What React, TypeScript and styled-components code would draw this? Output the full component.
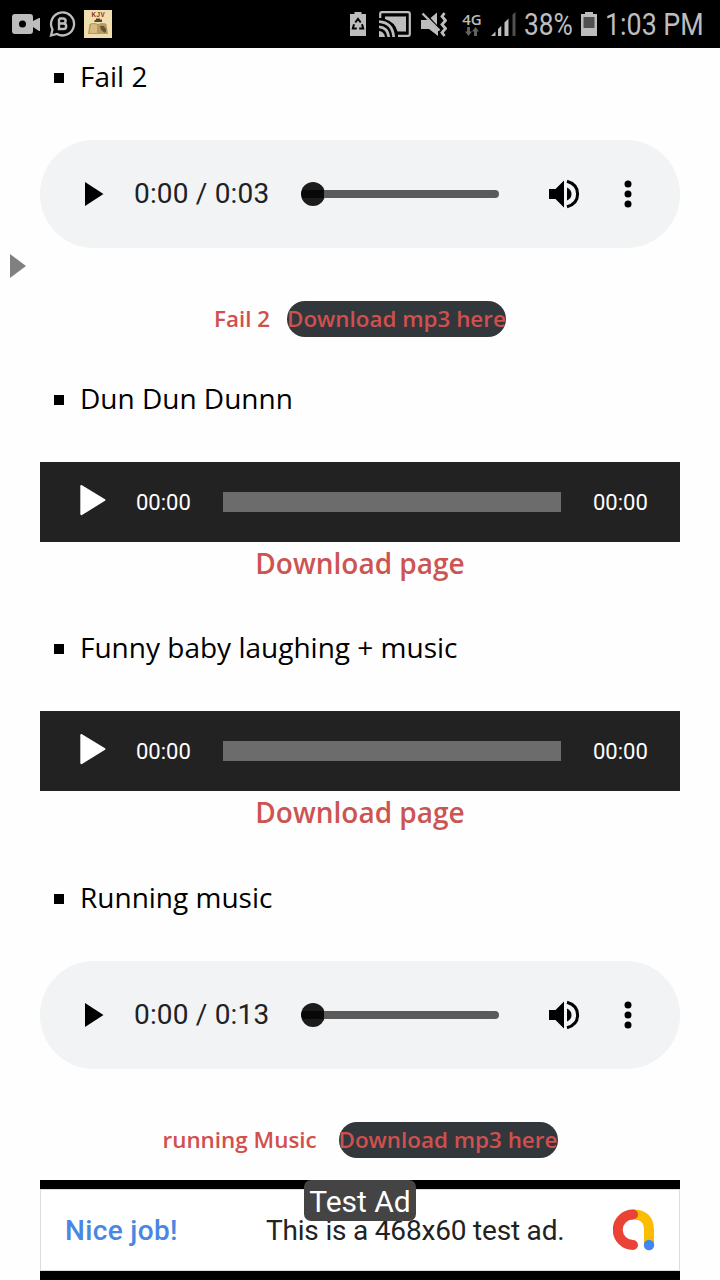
import React from 'react';
import styled, { createGlobalStyle } from 'styled-components';

const Global = createGlobalStyle`
  * { box-sizing: border-box; }
  body { margin: 0; background: #fff; overflow: hidden; }
`;

const Screen = styled.div`
  position: relative;
  width: 720px;
  height: 1280px;
  overflow: hidden;
  display: flex;
  flex-direction: column;
  background: #fefefe;
  color: #000;
  font-family: 'Open Sans', 'Noto Sans', sans-serif;
`;

const StatusBar = styled.header`
  flex: none;
  height: 48px;
  background: #000;
  color: #bdbdbd;
  display: flex;
  justify-content: space-between;
  padding: 0 16px 0 12px;
`;

const StatusGroup = styled.div`
  display: flex;
  align-items: center;
`;

const StatusIcon = styled.svg<{ $gap?: number }>`
  display: block;
  flex: none;
  margin-right: ${(p) => p.$gap ?? 8}px;
`;

const StatusText = styled.span<{ $w: number; $scale: number }>`
  display: block;
  width: ${(p) => p.$w}px;
  font: 400 31px/48px Roboto, sans-serif;
  white-space: nowrap;
  padding-top: 1px;

  > span {
    display: inline-block;
    transform: scaleX(${(p) => p.$scale});
    transform-origin: 0 50%;
  }
`;

const NetworkType = styled.div`
  display: flex;
  flex-direction: column;
  align-items: center;
  width: 22px;
  margin-right: 8px;
  font: 600 15px/14px 'Open Sans', sans-serif;

  svg {
    margin-top: 1px;
  }
`;

const Content = styled.main`
  flex: 1;
  min-height: 0;
  padding: 7px 40px 0;
`;

const Entry = styled.section<{ $after: number }>`
  margin-bottom: ${(p) => p.$after}px;
`;

const EntryTitle = styled.h2`
  display: flex;
  align-items: center;
  gap: 16px;
  height: 42px;
  margin: 0 0 43px;
  padding-left: 14px;
  font-size: 28px;
  font-weight: 400;
  line-height: 42px;
  white-space: nowrap;

  &::before {
    content: '';
    width: 10px;
    height: 10px;
    margin-top: 3px;
    background: #000;
  }
`;

const NativePlayer = styled.div`
  display: flex;
  align-items: center;
  height: 108px;
  margin-bottom: 53px;
  padding-left: 45px;
  border-radius: 54px;
  background: #f1f3f4;
`;

const PlayerTime = styled.span`
  width: 136px;
  margin-left: 30px;
  font: 400 28px/40px Roboto, sans-serif;
  letter-spacing: 0.17px;
  color: #202124;
  white-space: nowrap;
`;

const Seek = styled.div`
  display: flex;
  align-items: center;
  width: 198px;
  height: 24px;
  margin-left: 31px;
  margin-right: 50px;
`;

const Knob = styled.i`
  width: 24px;
  height: 24px;
  border-radius: 50%;
  background: linear-gradient(#1c1c1c 8px, #080808 8px 16px, #1c1c1c 16px);
`;

const SeekTrack = styled.i`
  flex: 1;
  height: 8px;
  margin-left: -1px;
  border-radius: 0 4px 4px 0;
  background: #5a5a5a;
`;

const MenuDots = styled.svg`
  margin-left: 44px;
`;

const Captions = styled.div`
  display: flex;
  justify-content: center;
  align-items: center;
  height: 36px;
  font-size: 22.4px;
  font-weight: 600;
  line-height: 35px;
  color: #d14f4d;
  white-space: nowrap;
`;

const CaptionLabel = styled.span<{ $w: number; $gap: number }>`
  width: ${(p) => p.$w}px;
  height: 36px;
  margin-right: ${(p) => p.$gap}px;
`;

const DownloadButton = styled.a`
  width: 219px;
  height: 36px;
  border-radius: 18px;
  background: #32373c;
`;

const DarkPlayer = styled.div`
  display: flex;
  align-items: center;
  height: 80px;
  padding-left: 40px;
  background: #222;
`;

const PlayGlyph = styled.svg`
  margin-bottom: 3px;
`;

const DarkTime = styled.span`
  width: 55px;
  padding-top: 2px;
  font: 400 22px/30px Roboto, sans-serif;
  color: #fff;
  white-space: nowrap;

  svg + & {
    margin-left: 30px;
  }
`;

const DarkTrack = styled.i`
  width: 338px;
  height: 20px;
  margin: 0 32px;
  background: #6c6c6c;
`;

const PageLink = styled.a`
  display: block;
  height: 42px;
  font-size: 28px;
  font-weight: 600;
  line-height: 43px;
  text-align: center;
  color: #cc5553;
`;

const SideArrow = styled.svg`
  position: absolute;
  left: 10px;
  top: 254px;
`;

const AdFrame = styled.footer`
  position: relative;
  flex: none;
  height: 100px;
  margin: 0 40px;
  padding: 9px 0;
  background: #000;
`;

const AdBody = styled.div`
  display: flex;
  align-items: center;
  height: 82px;
  padding-left: 24px;
  border: 1px solid #dcdcdc;
  background: #fff;
  font-family: Roboto, sans-serif;
  font-size: 28px;
  white-space: nowrap;
`;

const AdHeadline = styled.span`
  width: 201px;
  font-weight: 500;
  letter-spacing: 0.35px;
  color: #4a86e2;
`;

const AdText = styled.span`
  width: 347px;
  letter-spacing: -0.19px;
  color: #222;
`;

const AdBadge = styled.div`
  position: absolute;
  top: 0;
  left: 264px;
  width: 112px;
  height: 41px;
  border-radius: 7px;
  background: #444;
  color: #fff;
  font: 400 30px/43px Roboto, sans-serif;
  text-align: center;
  white-space: nowrap;
`;

function AudioPlayer({ duration }: { duration: string }) {
  return (
    <NativePlayer>
      <svg width="19" height="24" viewBox="0 0 19 24"><path d="M0 0L18.5 12L0 24Z" /></svg>
      <PlayerTime>0:00 / {duration}</PlayerTime>
      <Seek><Knob /><SeekTrack /></Seek>
      <svg width="31" height="30" viewBox="0 0 31 30">
        <path d="M0 10H6.5L15 1.5V28.5L6.5 20H0Z" />
        <path d="M18 8.5Q22.5 10.5 22.5 15T18 21.5Z" />
        <path d="M18 2.2Q28.6 5.2 28.6 15T18 27.8" fill="none" stroke="#000" strokeWidth="3" />
      </svg>
      <MenuDots width="8" height="28" viewBox="0 0 8 28">
        <circle cx="4" cy="4" r="3.5" /><circle cx="4" cy="14" r="3.5" /><circle cx="4" cy="24" r="3.5" />
      </MenuDots>
    </NativePlayer>
  );
}

function EmbeddedPlayer() {
  return (
    <>
      <DarkPlayer>
        <PlayGlyph width="26" height="31" viewBox="0 0 26 31">
          <path d="M2 0.2Q0.3 -0.5 0.3 1.5V28.5Q0.3 30.7 2 30L25 15.8Q26 15 25 14.2Z" fill="#fff" />
        </PlayGlyph>
        <DarkTime>00:00</DarkTime>
        <DarkTrack />
        <DarkTime>00:00</DarkTime>
      </DarkPlayer>
      <PageLink>Download page</PageLink>
    </>
  );
}

export default function App() {
  return (
    <Screen>
      <Global />
      <StatusBar>
        <StatusGroup>
          <StatusIcon width="28" height="22" viewBox="0 0 28 22" $gap={9}>
            <path fill="#bdbdbd" fillRule="evenodd" d="M3 1H18Q21 1 21 4V8L27 5H28V18H27L21 14V18Q21 21 18 21H3Q0 21 0 18V4Q0 1 3 1ZM10.5 7.5a3.5 3.5 0 1 0 0 7a3.5 3.5 0 1 0 0-7Z" />
          </StatusIcon>
          <StatusIcon width="27" height="28" viewBox="0 0 27 28" $gap={8} fill="none" stroke="#bdbdbd">
            <path d="M2 25.5L3.5 19.5A11.5 11.5 0 1 1 8 24Z" strokeWidth="2.3" />
            <path d="M10 8.5H14Q16.6 8.5 16.6 11T14 13.5H10V8.5M10 13.5H14.5Q17.2 13.5 17.2 16.2T14.5 19H10V13.5" strokeWidth="2.4" />
          </StatusIcon>
          <StatusIcon width="28" height="28" viewBox="0 0 28 28">
            <path fill="#f0dfae" d="M0 0H28V28H0Z" />
            <text x="14.3" y="6.8" textAnchor="middle" fontFamily="Liberation Sans" fontSize="6.3" fontWeight="700" fill="#8c2c18" letterSpacing=".5">KJV</text>
            <path fill="#504732" d="M12 8.5H16V9.5H18V12H10.5V10H12Z" />
            <path fill="#b89a60" d="M5.5 14Q10 12 14 14Q19 12 22.5 14L24 24H4Z" />
            <path fill="#d8bb7e" d="M7 14.5Q11 13.5 13 15V23H5.5Z" />
            <path fill="#66533b" d="M16 16H20L22.5 20L21 23L17 20Z" />
          </StatusIcon>
        </StatusGroup>
        <StatusGroup>
          <StatusIcon width="16" height="24" viewBox="0 0 16 24" $gap={13}>
            <path fill="#bdbdbd" d="M4.5 0H11.5V2H16V24H0V2H4.5Z" />
            <path d="M5.3 10.5L8 7L10.7 10.5M12 12.2L13.2 16.6H9.2M6.8 16.6H2.8L4 12.2" fill="none" stroke="#000" strokeWidth="2" />
          </StatusIcon>
          <StatusIcon width="32" height="26" viewBox="0 0 32 26" $gap={10}>
            <path d="M1.2 7V3Q1.2 1.2 3 1.2H29Q30.8 1.2 30.8 3V23Q30.8 24.8 29 24.8H19" fill="none" stroke="#bdbdbd" strokeWidth="2.2" />
            <path d="M6 5.5H27V20.5H18.5Q16 11 6 8Z" fill="#bdbdbd" />
            <path d="M0 10.7Q13.5 11.5 14.7 26M0 15.8Q8.8 16.5 9.8 26" fill="none" stroke="#bdbdbd" strokeWidth="2.7" />
            <path d="M0 20Q5 20.5 6 26H0Z" fill="#bdbdbd" />
          </StatusIcon>
          <StatusIcon width="26" height="25" viewBox="0 0 26 25" $gap={14}>
            <path fill="#bdbdbd" d="M0 8H7L17 18V24L8 17H0ZM9.5 6L16 0.5V13Z" />
            <path d="M1.5 1.5L18.5 18.5" stroke="#bdbdbd" strokeWidth="2.4" />
            <path d="M23.5 1L21 4.5L24.5 8.5L21 12.5L24.5 16.5L21 20.5L23.5 24" fill="none" stroke="#bdbdbd" strokeWidth="2.8" />
          </StatusIcon>
          <NetworkType>
            4G
            <svg width="14" height="9" viewBox="0 0 14 9"><path fill="#626262" d="M2 0H5V4.5H7L3.5 9L0 4.5H2ZM9 9H12V4.5H14L10.5 0L7 4.5H9Z" /></svg>
          </NetworkType>
          <StatusIcon width="25" height="24" viewBox="0 0 25 24" $gap={8}>
            <path fill="#bdbdbd" d="M0 24L4.5 19.5V24ZM7 17L10.3 13.7V24H7ZM13.5 10.5L17.5 6.5V24H13.5Z" />
            <path fill="#505050" d="M21.5 2.5L24.5 0V24H21.5Z" />
          </StatusIcon>
          <StatusText $w={57} $scale={0.85}><span>38%</span></StatusText>
          <StatusIcon width="16" height="24" viewBox="0 0 16 24" $gap={8}>
            <path fill="#bdbdbd" d="M4 0H12V2H16V24H0V2H4Z" />
            <path fill="#505050" d="M2.5 5H13.5V16H2.5Z" />
          </StatusIcon>
          <StatusText $w={99} $scale={0.865}><span>1:03 PM</span></StatusText>
        </StatusGroup>
      </StatusBar>

      <Content>
        <Entry $after={40}>
          <EntryTitle>Fail 2</EntryTitle>
          <AudioPlayer duration="0:03" />
          <Captions>
            <CaptionLabel $w={57} $gap={16}>Fail 2</CaptionLabel>
            <DownloadButton>Download mp3 here</DownloadButton>
          </Captions>
        </Entry>
        <Entry $after={42}>
          <EntryTitle>Dun Dun Dunnn</EntryTitle>
          <EmbeddedPlayer />
        </Entry>
        <Entry $after={43}>
          <EntryTitle>Funny baby laughing + music</EntryTitle>
          <EmbeddedPlayer />
        </Entry>
        <Entry $after={0}>
          <EntryTitle>Running music</EntryTitle>
          <AudioPlayer duration="0:13" />
          <Captions>
            <CaptionLabel $w={154} $gap={22}>running Music</CaptionLabel>
            <DownloadButton>Download mp3 here</DownloadButton>
          </Captions>
        </Entry>
      </Content>

      <SideArrow width="16" height="24" viewBox="0 0 16 24"><path fill="#808080" d="M0 0L16 12L0 24Z" /></SideArrow>

      <AdFrame>
        <AdBody>
          <AdHeadline>Nice job!</AdHeadline>
          <AdText>This is a 468x60 test ad.</AdText>
          <svg width="42" height="42" viewBox="0 0 42 42" fill="none" strokeWidth="10" strokeLinecap="round">
            <path d="M20 5.5Q36 5.5 36 21V36" stroke="#fbbc04" />
            <path d="M20 5.5A15.2 15.2 0 0 0 20 36" stroke="#ea4335" />
            <circle cx="36" cy="36" r="5.2" fill="#4285f4" />
          </svg>
        </AdBody>
        <AdBadge>Test Ad</AdBadge>
      </AdFrame>
    </Screen>
  );
}
